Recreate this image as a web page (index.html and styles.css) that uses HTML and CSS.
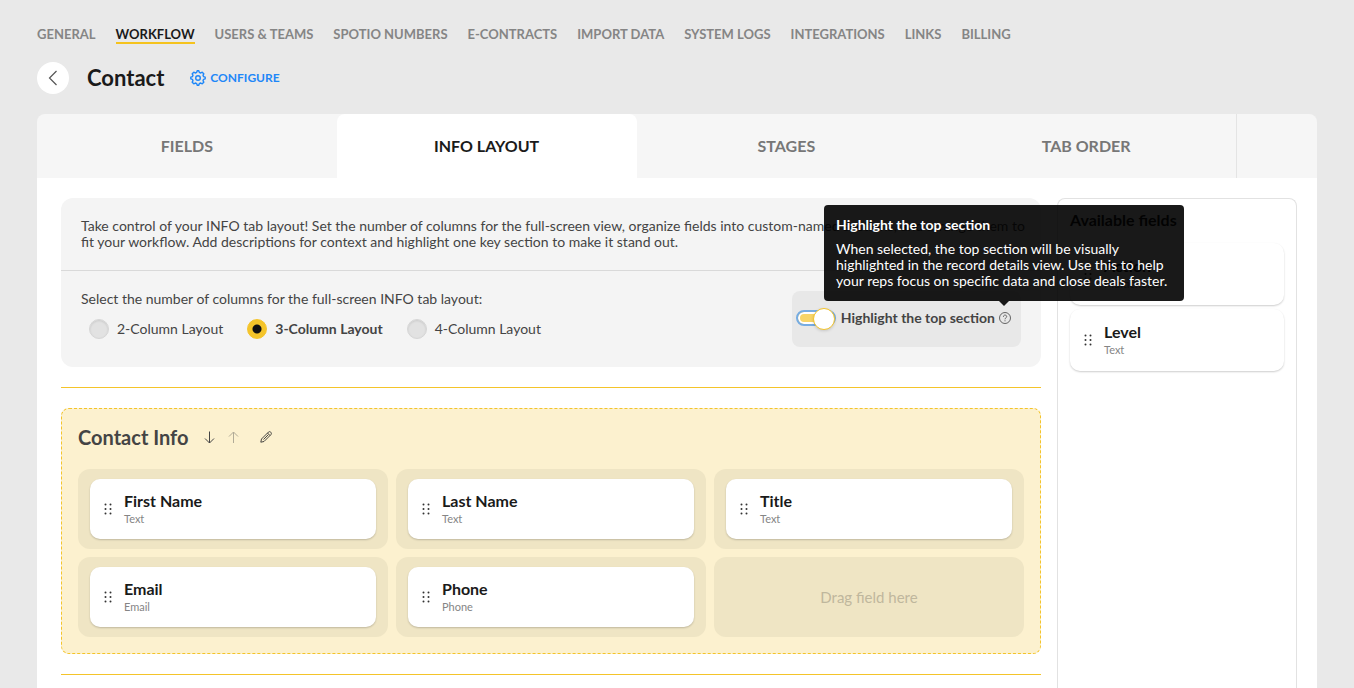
FILE: index.html
```html
<!DOCTYPE html>
<html lang="en">
<head>
  <meta charset="UTF-8" />
  <meta name="viewport" content="width=device-width, initial-scale=1.0"/>
  <title>Contact - Info Layout</title>
  <link rel="stylesheet" href="styles.css">
</head>
<body>
  <svg class="sprite" aria-hidden="true">
    <symbol id="grip" viewBox="0 0 8 12">
      <g fill="#333">
        <circle cx="1.5" cy="1.5" r="1"/><circle cx="6.5" cy="1.5" r="1"/>
        <circle cx="1.5" cy="6" r="1"/><circle cx="6.5" cy="6" r="1"/>
        <circle cx="1.5" cy="10.5" r="1"/><circle cx="6.5" cy="10.5" r="1"/>
      </g>
    </symbol>
  </svg>

  <div class="page">
    <nav class="main-nav">
      <a href="#">GENERAL</a>
      <a href="#" class="active">WORKFLOW</a>
      <a href="#">USERS &amp; TEAMS</a>
      <a href="#">SPOTIO NUMBERS</a>
      <a href="#">E-CONTRACTS</a>
      <a href="#">IMPORT DATA</a>
      <a href="#">SYSTEM LOGS</a>
      <a href="#">INTEGRATIONS</a>
      <a href="#">LINKS</a>
      <a href="#">BILLING</a>
    </nav>

    <header class="page-header">
      <button class="back-btn" aria-label="Back">
        <svg width="10" height="16" viewBox="0 0 10 16" fill="none" stroke="#555" stroke-width="1.2"><path d="M8.5 1 1.5 8l7 7"/></svg>
      </button>
      <h1>Contact</h1>
      <a href="#" class="configure">
        <svg width="16" height="16" viewBox="0 0 16 16" fill="none" stroke="currentColor" stroke-width="1.4" stroke-linejoin="round">
          <path d="M6.7 2.4 7.2.8h1.6l.5 1.6 1.4.6 1.5-.8 1.6 1.6-.8 1.5.6 1.4 1.6.5v1.6l-1.6.5-.6 1.4.8 1.5-1.6 1.6-1.5-.8-1.4.6-.5 1.6H7.2l-.5-1.6-1.4-.6-1.5.8-1.6-1.6.8-1.5-.6-1.4L.8 8.800V7.200l1.600-.5L3 5.300l-.8-1.500 1.600-1.600 1.500.8z"/>
          <circle cx="8" cy="8" r="2.3"/>
        </svg>
        CONFIGURE
      </a>
    </header>

    <div class="tabs" role="tablist">
      <button role="tab" class="tab">FIELDS</button>
      <button role="tab" class="tab active" aria-selected="true">INFO LAYOUT</button>
      <button role="tab" class="tab">STAGES</button>
      <button role="tab" class="tab">TAB ORDER</button>
      <div class="tabs-end"></div>
    </div>

    <main class="panel">
      <div class="layout">
        <section class="settings">
          <p class="settings-intro">Take control of your INFO tab layout! Set the number of columns for the full-screen view, organize fields into custom-named sections, and arrange them to fit your workflow. Add descriptions for context and highlight one key section to make it stand out.</p>
          <div class="settings-body">
            <fieldset class="columns">
              <legend>Select the number of columns for the full-screen INFO tab layout:</legend>
              <div class="columns-options">
                <label><input type="radio" name="columns" value="2"> 2-Column Layout</label>
                <label><input type="radio" name="columns" value="3" checked> 3-Column Layout</label>
                <label><input type="radio" name="columns" value="4"> 4-Column Layout</label>
              </div>
            </fieldset>
            <div class="highlight">
              <input type="checkbox" id="highlightTop" class="toggle" checked>
              <label for="highlightTop">Highlight the top section</label>
              <span class="help">
                <svg width="12" height="12" viewBox="0 0 12 12" fill="none" stroke="#555" stroke-width="0.9">
                  <circle cx="6" cy="6" r="5.5"/>
                  <path d="M4.4 4.8c0-2.3 3.3-2.2 3.3-.2C7.7 5.900 6 5.800 6 7.300M6 8.300v1"/>
                </svg>
                <span class="tooltip" role="tooltip">
                  <strong>Highlight the top section</strong>
                  <span>When selected, the top section will be visually highlighted in the record details view. Use this to help your reps focus on specific data and close deals faster.</span>
                </span>
              </span>
            </div>
          </div>
        </section>

        <hr class="divider">

        <section class="field-section">
          <div class="section-head">
            <h2>Contact Info</h2>
            <button class="icon-btn" aria-label="Move down">
              <svg width="12" height="14" viewBox="0 0 12 14" fill="none" stroke="#444"><path d="M5.5 1.500v11.500M1 8.500 5.500 13 10 8.500"/></svg>
            </button>
            <button class="icon-btn" aria-label="Move up" disabled>
              <svg width="12" height="14" viewBox="0 0 12 14" fill="none" stroke="#444"><path d="M5.500 13V2M1 6.500 5.500 2 10 6.500"/></svg>
            </button>
            <button class="icon-btn edit" aria-label="Edit section">
              <svg width="12" height="12" viewBox="0 0 12 12" fill="none" stroke="#333" stroke-width="0.9" stroke-linejoin="round"><path d="M.8 11.200 1.500 8 8.500 1c1.400-1.300 3.800 1 2.500 2.500l-7 7zM7.500 2 10 4.500M3.500 8.500 8.300 3.700"/></svg>
            </button>
          </div>
          <div class="slots">
            <div class="slot">
              <div class="card"><svg class="grip"><use href="#grip"/></svg><div><h3>First Name</h3><p>Text</p></div></div>
            </div>
            <div class="slot">
              <div class="card"><svg class="grip"><use href="#grip"/></svg><div><h3>Last Name</h3><p>Text</p></div></div>
            </div>
            <div class="slot">
              <div class="card"><svg class="grip"><use href="#grip"/></svg><div><h3>Title</h3><p>Text</p></div></div>
            </div>
            <div class="slot">
              <div class="card"><svg class="grip"><use href="#grip"/></svg><div><h3>Email</h3><p>Email</p></div></div>
            </div>
            <div class="slot">
              <div class="card"><svg class="grip"><use href="#grip"/></svg><div><h3>Phone</h3><p>Phone</p></div></div>
            </div>
            <div class="slot empty">Drag field here</div>
          </div>
        </section>

        <hr class="divider">
      </div>

      <aside class="available">
        <h2>Available fields</h2>
        <div class="card"><svg class="grip"><use href="#grip"/></svg><div><h3>Action</h3><p>Multichoice</p></div></div>
        <div class="card"><svg class="grip"><use href="#grip"/></svg><div><h3>Level</h3><p>Text</p></div></div>
      </aside>
    </main>
  </div>
</body>
</html>
```

FILE: styles.css
```css
* {
  box-sizing: border-box;
}

body {
  font-family: Lato, sans-serif;
  font-size: 14px;
  line-height: 16px;
  margin: 0;
  color: #444;
  background-color: #e9e9e9;
}

h1, h2, h3, p {
  margin: 0;
}

a {
  text-decoration: none;
}

button {
  font-family: inherit;
  border: none;
  background: none;
  padding: 0;
  cursor: pointer;
}

svg {
  display: block;
  flex: none;
}

.sprite {
  position: absolute;
  width: 0;
  height: 0;
}

.page {
  display: flex;
  flex-direction: column;
  min-height: 100vh;
  padding: 26px 37px 0;
}

/* top navigation */
.main-nav {
  display: flex;
  gap: 20px;
}

.main-nav a {
  height: 18px;
  color: #858585;
  font-size: 13px;
  font-weight: bold;
}

.main-nav a.active {
  color: #1a1a1a;
  border-bottom: 2px solid #f5c31d;
}

.page-header {
  display: flex;
  align-items: center;
  margin: 18px 0 20px;
}

.back-btn {
  display: flex;
  align-items: center;
  justify-content: center;
  width: 32px;
  height: 32px;
  border-radius: 50%;
  background-color: white;
}

h1 {
  margin: 0 26px 0 18px;
  color: #1a1a1a;
  font-size: 22px;
  line-height: 28px;
}

.configure {
  display: flex;
  align-items: center;
  gap: 4px;
  color: #1e87f8;
  font-size: 12px;
  font-weight: bold;
}

/* tabs */
.tabs {
  display: flex;
  height: 64px;
  border-radius: 8px 8px 0 0;
  background-color: #f6f6f6;
}

.tab {
  flex: 1;
  padding-bottom: 2px;
  color: #777;
  font-size: 16px;
  font-weight: bold;
}

.tab.active {
  color: #1a1a1a;
  background-color: white;
  border-radius: 8px 8px 0 0;
}

.tabs-end {
  width: 81px;
  border-left: 1px solid #e4e4e4;
}

.panel {
  display: flex;
  flex: 1;
  gap: 16px;
  padding: 20px 20px 0 24px;
  background-color: white;
}

.layout {
  flex: 1;
}

/* layout settings */
.settings {
  border-radius: 12px;
  background-color: #f4f4f4;
}

.settings-intro {
  padding: 20px 12px 20px 20px;
  border-bottom: 1px solid #d9d9d9;
}

.settings-body {
  display: flex;
  justify-content: space-between;
  padding: 20px;
}

.columns {
  margin: 0;
  padding: 0;
  border: none;
}

.columns legend {
  padding: 0;
}

.columns-options {
  display: flex;
  gap: 24px;
  padding: 12px 8px 0;
}

.columns-options label {
  display: flex;
  align-items: center;
  gap: 8px;
}

.columns-options label:has(:checked) {
  font-weight: bold;
}

input[type="radio"] {
  appearance: none;
  width: 20px;
  height: 20px;
  margin: 0;
  border: 1px solid #d6d6d6;
  border-radius: 50%;
  background-color: #e2e2e2;
  box-shadow: inset 0 1px 2px rgba(0,0,0,0.1);
}

input[type="radio"]:checked {
  border-color: #f4c42a;
  background: radial-gradient(circle, #111 4px, #f4c42a 5px);
  box-shadow: none;
}

.highlight {
  display: flex;
  align-items: center;
  height: 56px;
  padding: 0 10px 2px 4px;
  border-radius: 8px;
  background-color: #e8e8e8;
  font-weight: bold;
}

.toggle {
  appearance: none;
  position: relative;
  width: 40px;
  height: 16px;
  margin: 0 5px 0 0;
  border: 2px solid #76ace2;
  border-radius: 8px;
  background: #f8d568;
  box-shadow: inset 0 0 0 2px white;
}

.toggle::after {
  content: "";
  position: absolute;
  top: -4px;
  right: -1px;
  width: 20px;
  height: 20px;
  border: 1px solid #f4c42a;
  border-radius: 50%;
  background-color: white;
  box-shadow: 0 1px 3px rgba(0,0,0,0.15);
}

.help {
  position: relative;
  margin-left: 4px;
}

.tooltip {
  position: absolute;
  right: -173px;
  bottom: 100%;
  z-index: 10;
  width: 360px;
  margin-bottom: 11px;
  padding: 12px;
  border-radius: 4px;
  background-color: rgba(0,0,0,0.9);
  color: white;
  font-weight: normal;
}

.tooltip strong {
  display: block;
  margin-bottom: 8px;
}

.tooltip::after {
  content: "";
  position: absolute;
  top: 100%;
  left: 175px;
  border: 5px solid transparent;
  border-top-color: rgba(0,0,0,0.9);
}

.divider {
  margin: 20px 0;
  border: none;
  border-top: 1px solid #f4c42a;
}

.divider:last-child {
  margin-bottom: 0;
}

/* section with its fields */
.field-section {
  padding: 16px;
  border: 1px dashed #f4c42a;
  border-radius: 8px;
  background-color: #fcf1cf;
}

.section-head {
  display: flex;
  align-items: center;
  gap: 12px;
  margin-bottom: 20px;
}

.section-head h2 {
  margin-right: 4px;
  font-size: 20px;
  line-height: 24px;
}

.icon-btn:disabled {
  opacity: 0.4;
}

.icon-btn.edit {
  margin-left: 8px;
}

.slots {
  display: grid;
  grid-template-columns: repeat(3, 1fr);
  gap: 8px;
}

.slot {
  height: 80px;
  padding: 10px 12px;
  border-radius: 12px;
  background-color: #efe5c4;
}

.slot.empty {
  display: flex;
  align-items: center;
  justify-content: center;
  color: #bfb79d;
  font-size: 15px;
}

.card {
  display: flex;
  align-items: center;
  gap: 12px;
  height: 60px;
  padding: 0 14px;
  border-radius: 10px;
  background-color: white;
  box-shadow: 0 1px 2px rgba(0,0,0,0.2);
}

.card h3 {
  color: #1a1a1a;
  font-size: 16px;
  line-height: 20px;
}

.card p {
  color: #858585;
  font-size: 11px;
}

.grip {
  width: 8px;
  height: 12px;
}

/* available fields */
.available {
  display: flex;
  flex-direction: column;
  gap: 4px;
  width: 240px;
  padding: 12px;
  border: 1px solid #e2e2e2;
  border-bottom: none;
  border-radius: 8px 8px 0 0;
}

.available h2 {
  margin-bottom: 10px;
  color: #1a1a1a;
  font-size: 16px;
  line-height: 18px;
}

.available .card {
  height: 62px;
}
```
